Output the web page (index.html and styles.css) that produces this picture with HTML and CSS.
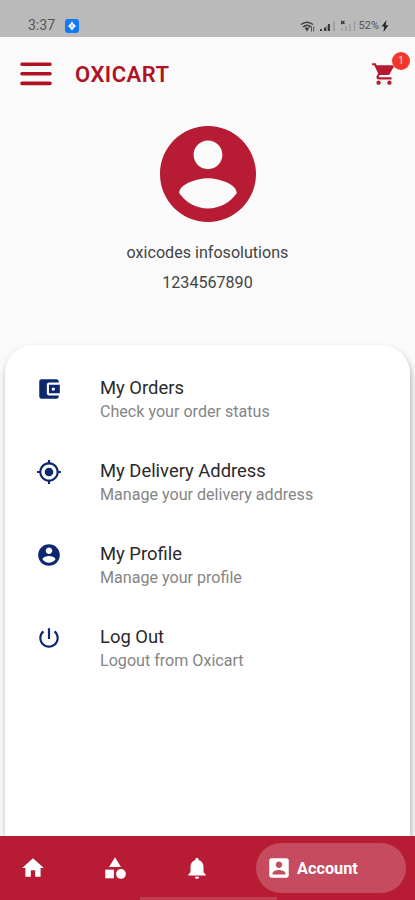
FILE: index.html
```html
<!DOCTYPE html>
<html lang="en">
<head>
  <meta charset="UTF-8" />
  <meta name="viewport" content="width=device-width, initial-scale=1.0"/>
  <title>Oxicart - Account</title>
  <link rel="stylesheet" href="styles.css">
</head>
<body>
  <div class="app">
    <!-- Status bar -->
    <div class="status-bar">
      <span class="time">3:37</span>
      <svg class="status-app" viewBox="0 0 14 14">
        <rect width="14" height="14" rx="3" fill="#1478f5"/>
        <path d="M7 2.200l1.600 2.600L11 7 8.600 9.200 7 11.800 5.400 9.200 3 7l2.400-2.200z" fill="#fff"/>
        <path d="M7 5v4M5.500 7h3" stroke="#83b9ff" stroke-width="1"/>
      </svg>
      <div class="status-icons">
        <svg class="wifi" viewBox="0 0 15 13">
          <path d="M1 4.500Q7 -.2 13 4.500M3 7Q7 3.500 11 7" fill="none" stroke="#3e3e3e" stroke-width="1.500"/>
          <path d="M4.500 7.500h5L7 11.500z" fill="#3e3e3e"/>
          <path d="M11.500 6.500v5M13.700 6.500v5" stroke="#555" stroke-width="1"/>
        </svg>
        <svg class="signal" viewBox="0 0 17 12">
          <path d="M2 9v2M6 7.500V11M10 4v7" stroke="#3a3a3a" stroke-width="2"/>
          <path d="M8 5.500V11" stroke="#666" stroke-width="1"/>
          <path d="M15 1v10" stroke="#999" stroke-width="1.500"/>
        </svg>
        <svg class="signal-weak" viewBox="0 0 16 12">
          <path d="M1 1l3.500 3M4.500 1L1 4" stroke="#333" stroke-width="1.500"/>
          <path d="M2 8v3M6 6v5M10 4v7M14.500 1v10" stroke="#999" stroke-width="1.300"/>
        </svg>
        <span class="battery">52%</span>
        <svg class="bolt" viewBox="0 0 8 12">
          <path d="M5.500 0L.5 6.500h2.700L2.500 12l5-6.800H4.800z" fill="#2b2b2b"/>
        </svg>
      </div>
    </div>

    <!-- Header -->
    <header class="header">
      <svg class="menu-icon" viewBox="0 0 32 24">
        <path d="M2 2.200h28M2 11.800h28M2 21.400h28" stroke="#b01020" stroke-width="3.600" stroke-linecap="round"/>
      </svg>
      <h1>OXICART</h1>
      <div class="cart">
        <svg viewBox="0 0 24 24">
          <path d="M7 18c-1.100 0-1.990.9-1.990 2S5.900 22 7 22s2-.9 2-2-.9-2-2-2zM1 2v2h2l3.600 7.590-1.350 2.450c-.16.28-.25.61-.25.96 0 1.100.9 2 2 2h12v-2H7.420c-.14 0-.25-.11-.25-.25l.03-.12.9-1.630h7.450c.75 0 1.410-.41 1.750-1.030l3.580-6.490c.08-.14.12-.31.12-.48 0-.55-.45-1-1-1H5.210l-.94-2H1zm16 16c-1.100 0-1.990.9-1.990 2s.89 2 1.990 2 2-.9 2-2-.9-2-2-2z"/>
        </svg>
        <span class="badge">1</span>
      </div>
    </header>

    <!-- User -->
    <section class="user">
      <svg class="avatar" viewBox="2 2 20 20">
        <path d="M12 2C6.480 2 2 6.480 2 12s4.480 10 10 10 10-4.480 10-10S17.520 2 12 2zm0 3c1.660 0 3 1.340 3 3s-1.340 3-3 3-3-1.340-3-3 1.340-3 3-3zm0 14.200c-2.500 0-4.710-1.280-6-3.220.03-1.990 4-3.080 6-3.080 1.990 0 5.970 1.090 6 3.080-1.290 1.940-3.500 3.220-6 3.220z"/>
      </svg>
      <p class="user-name">oxicodes infosolutions</p>
      <p class="user-phone">1234567890</p>
    </section>

    <!-- Account options -->
    <main class="card">
      <ul class="options">
        <li class="option">
          <svg viewBox="0 0 24 24">
            <path d="M21 18v1c0 1.100-.9 2-2 2H5c-1.110 0-2-.9-2-2V5c0-1.100.89-2 2-2h14c1.100 0 2 .9 2 2v1h-9c-1.110 0-2 .9-2 2v8c0 1.100.89 2 2 2h9zm-9-2h10V8H12v8zm4-2.500c-.83 0-1.500-.67-1.500-1.500s.67-1.500 1.500-1.500 1.500.67 1.500 1.500-.67 1.500-1.500 1.500z"/>
          </svg>
          <div class="option-text">
            <h2>My Orders</h2>
            <p>Check your order status</p>
          </div>
        </li>
        <li class="option">
          <svg viewBox="0 0 24 24">
            <path d="M12 8c-2.210 0-4 1.790-4 4s1.790 4 4 4 4-1.790 4-4-1.790-4-4-4zm8.940 3c-.46-4.170-3.770-7.480-7.940-7.940V1h-2v2.060C6.830 3.520 3.520 6.830 3.060 11H1v2h2.060c.46 4.170 3.770 7.480 7.940 7.940V23h2v-2.060c4.170-.46 7.480-3.770 7.940-7.940H23v-2h-2.060zM12 19c-3.870 0-7-3.130-7-7s3.130-7 7-7 7 3.130 7 7-3.130 7-7 7z"/>
          </svg>
          <div class="option-text">
            <h2>My Delivery Address</h2>
            <p>Manage your delivery address</p>
          </div>
        </li>
        <li class="option">
          <svg viewBox="0 0 24 24">
            <path d="M12 2C6.480 2 2 6.480 2 12s4.480 10 10 10 10-4.480 10-10S17.520 2 12 2zm0 3c1.660 0 3 1.340 3 3s-1.340 3-3 3-3-1.340-3-3 1.340-3 3-3zm0 14.200c-2.500 0-4.710-1.280-6-3.220.03-1.990 4-3.080 6-3.080 1.990 0 5.970 1.090 6 3.080-1.290 1.940-3.500 3.220-6 3.220z"/>
          </svg>
          <div class="option-text">
            <h2>My Profile</h2>
            <p>Manage your profile</p>
          </div>
        </li>
        <li class="option">
          <svg viewBox="0 0 24 24">
            <path d="M13 3h-2v10h2V3zm4.830 2.170l-1.420 1.420C17.990 7.860 19 9.810 19 12c0 3.870-3.130 7-7 7s-7-3.130-7-7c0-2.190 1.010-4.140 2.580-5.420L6.170 5.170C4.230 6.820 3 9.260 3 12c0 4.970 4.030 9 9 9s9-4.030 9-9c0-2.740-1.230-5.180-3.170-6.830z"/>
          </svg>
          <div class="option-text">
            <h2>Log Out</h2>
            <p>Logout from Oxicart</p>
          </div>
        </li>
      </ul>
    </main>

    <!-- Bottom navigation -->
    <nav class="bottom-nav">
      <a class="nav-item">
        <svg viewBox="0 0 24 24"><path d="M10 20v-6h4v6h5v-8h3L12 3 2 12h3v8z"/></svg>
      </a>
      <a class="nav-item">
        <svg viewBox="0 0 24 24"><path d="M12 2l-5.500 9h11z"/><circle cx="17.500" cy="17.500" r="4.500"/><path d="M3 13.500h8v8H3z"/></svg>
      </a>
      <a class="nav-item">
        <svg viewBox="0 0 24 24"><path d="M12 22c1.100 0 2-.9 2-2h-4c0 1.100.89 2 2 2zm6-6v-5c0-3.070-1.640-5.640-4.500-6.320V4c0-.83-.67-1.500-1.500-1.500s-1.500.67-1.500 1.500v.68C7.630 5.360 6 7.920 6 11v5l-2 2v1h16v-1l-2-2z"/></svg>
      </a>
      <a class="nav-item active">
        <svg viewBox="0 0 24 24"><path d="M3 5v14c0 1.100.89 2 2 2h14c1.100 0 2-.9 2-2V5c0-1.100-.9-2-2-2H5c-1.110 0-2 .9-2 2zm12 4c0 1.660-1.340 3-3 3s-3-1.340-3-3 1.340-3 3-3 3 1.340 3 3zm-9 8c0-2 4-3.100 6-3.100s6 1.100 6 3.100v1H6v-1z"/></svg>
        <span>Account</span>
      </a>
      <div class="home-indicator"></div>
    </nav>
  </div>
</body>
</html>
```

FILE: styles.css
```css
* {
  margin: 0;
  padding: 0;
  box-sizing: border-box;
}

body {
  font-family: Roboto, sans-serif;
  background-color: #fafafa;
  color: #444;
}

svg {
  display: block;
  flex-shrink: 0;
}

.app {
  height: 900px;
  display: flex;
  flex-direction: column;
  overflow: hidden;
}

.status-bar {
  height: 37px;
  flex-shrink: 0;
  display: flex;
  align-items: flex-end;
  padding: 0 26px 4px 28px;
  background: #bababa;
}

.time {
  width: 37px;
  font-size: 14px;
  line-height: 15px;
  color: #555;
}

.status-app {
  width: 14px;
  height: 14px;
}

.status-icons {
  display: flex;
  align-items: center;
  margin-left: auto;
}

.wifi {
  width: 15px;
  height: 13px;
  margin-right: 4px;
}

.signal {
  width: 17px;
  height: 12px;
  margin-right: 4px;
}

.signal-weak {
  width: 16px;
  height: 12px;
  margin-right: 3px;
}

.battery {
  font-size: 11px;
  line-height: 14px;
  color: #555;
}

.bolt {
  width: 8px;
  height: 12px;
  margin-left: 2px;
}

.header {
  height: 73px;
  flex-shrink: 0;
  display: flex;
  align-items: center;
  padding: 0 18px 0 20px;
}

.menu-icon {
  width: 32px;
  height: 24px;
}

.header h1 {
  margin: 2px 0 0 23px;
  font-size: 22px;
  font-weight: 600;
  line-height: 26px;
  letter-spacing: 0.5px;
  color: #b01224;
}

.cart {
  position: relative;
  margin-left: auto;
}

.cart svg {
  width: 26px;
  height: 26px;
  fill: #b51a31;
}

.badge {
  position: absolute;
  top: -9px;
  right: -13px;
  width: 18px;
  height: 18px;
  border-radius: 50%;
  background: #f4372c;
  color: #ffd9d4;
  font-size: 10px;
  line-height: 18px;
  text-align: center;
}

.user {
  height: 235px;
  flex-shrink: 0;
  display: flex;
  flex-direction: column;
  align-items: center;
  padding-top: 15.5px;
}

.avatar {
  width: 96px;
  height: 96px;
  fill: #b71c34;
}

.user p {
  font-size: 16.1px;
  line-height: 30px;
}

.user-name {
  margin-top: 16.5px;
}

.card {
  flex: 1;
  margin: 0 5px;
  padding: 30px 31px 0;
  background: #fff;
  border-radius: 28px 28px 0 0;
  box-shadow: 1px 4px 6px rgba(0, 0, 0, 0.32);
}

.options {
  list-style: none;
}

.option {
  height: 83px;
  display: flex;
}

.option svg {
  width: 26px;
  height: 26px;
  margin-top: 1px;
  fill: #0d286f;
}

.option-text {
  margin-left: 38px;
}

.option h2 {
  font-size: 18.4px;
  font-weight: 400;
  line-height: 25px;
  color: #2a2a2a;
}

.option p {
  font-size: 16.1px;
  line-height: 23px;
  color: #858585;
}

.bottom-nav {
  position: relative;
  height: 64px;
  flex-shrink: 0;
  display: flex;
  align-items: center;
  padding: 0 9px 0 20px;
  background: #b71c34;
}

.nav-item {
  flex: 0 0 82px;
}

.nav-item svg {
  width: 26px;
  height: 26px;
  fill: #fff;
}

.nav-item.active {
  flex-basis: 150px;
  height: 50px;
  margin-left: -10px;
  display: flex;
  align-items: center;
  gap: 5px;
  padding-left: 10px;
  border-radius: 25px;
  background: #c64b5e;
}

.nav-item span {
  font-size: 16.3px;
  font-weight: 700;
  color: #fff;
}

.home-indicator {
  position: absolute;
  left: 140px;
  bottom: 0;
  width: 137px;
  height: 3px;
  background: #c13c50;
}
```
